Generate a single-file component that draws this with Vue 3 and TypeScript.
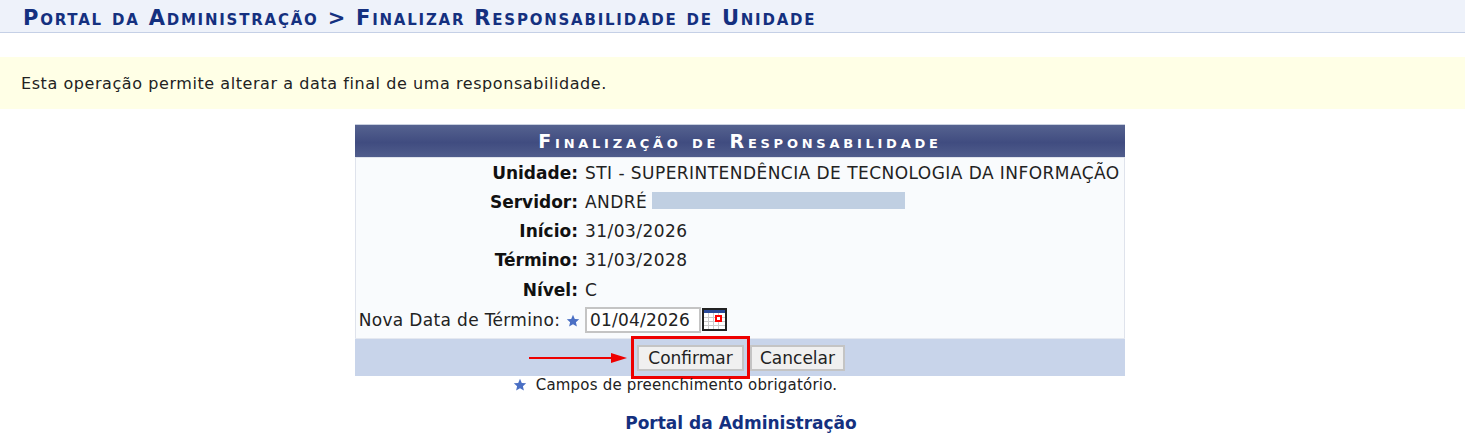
<script setup lang="ts">
const rows = [
  { label: 'Unidade:', value: 'STI - SUPERINTENDÊNCIA DE TECNOLOGIA DA INFORMAÇÃO' },
  { label: 'Servidor:', value: 'ANDRÉ', redacted: true },
  { label: 'Início:', value: '31/03/2026' },
  { label: 'Término:', value: '31/03/2028' },
  { label: 'Nível:', value: 'C' },
]
</script>

<template>
  <div class="page">
    <h2 class="page-title">Portal da Administração &gt; Finalizar Responsabilidade de Unidade</h2>

    <div class="intro">Esta operação permite alterar a data final de uma responsabilidade.</div>

    <div class="form-wrap">
      <table class="form-table">
        <caption>Finalização de Responsabilidade</caption>
        <tbody>
          <tr v-for="row in rows" :key="row.label">
            <th>{{ row.label }}</th>
            <td>
              {{ row.value }}
              <span v-if="row.redacted" class="redacted"></span>
            </td>
          </tr>
          <tr class="date-row">
            <th class="plain">
              Nova Data de Término:
              <svg class="star" viewBox="0 0 14 14"><path d="M7 .8l1.8 4.1 4.4.4-3.3 2.9 1 4.4L7 10.3l-3.9 2.3 1-4.4L.8 5.3l4.4-.4z" /></svg>
            </th>
            <td>
              <div class="date-field">
                <input class="date-input" type="text" value="01/04/2026" />
                <svg class="calendar" viewBox="0 0 25 23">
                  <rect x="0" y="0" width="25" height="23" fill="#222" />
                  <rect x="2" y="2" width="21" height="3" fill="#2a4a9a" />
                  <rect x="2" y="5" width="21" height="16" fill="#fff" />
                  <path d="M6.5 5v16M11.5 5v16M16.5 5v16M2 9.5h21M2 13.5h21M2 17.5h21" stroke="#ccc" stroke-width="1" />
                  <rect x="14" y="8" width="5" height="5" fill="#fff" stroke="#f00" stroke-width="2" />
                </svg>
              </div>
            </td>
          </tr>
        </tbody>
        <tfoot>
          <tr>
            <td colspan="2">
              <div class="actions">
                <span class="arrow-line"></span>
                <span class="highlight">
                  <button type="button" class="confirm">Confirmar</button>
                </span>
                <button type="button" class="cancel">Cancelar</button>
              </div>
            </td>
          </tr>
        </tfoot>
      </table>
    </div>

    <div class="required">
      <svg class="star" viewBox="0 0 14 14"><path d="M7 .8l1.8 4.1 4.4.4-3.3 2.9 1 4.4L7 10.3l-3.9 2.3 1-4.4L.8 5.3l4.4-.4z" /></svg>
      Campos de preenchimento obrigatório.
    </div>

    <div class="back-link"><a href="#">Portal da Administração</a></div>
  </div>
</template>

<style>
html, body {
  margin: 0;
  background: #fff;
}
</style>

<style scoped>
.page {
  height: 433px;
  font-family: "DejaVu Sans", Verdana, sans-serif;
  font-size: 16px;
  color: #222;
}

.page-title {
  margin: 0;
  height: 32px;
  padding-left: 23px;
  line-height: 36px;
  background: #eef2fa;
  border-bottom: 1px solid #c5d0e6;
  color: #14307f;
  font-size: 21px;
  font-weight: bold;
  font-variant: small-caps;
  letter-spacing: 1.77px;
  white-space: nowrap;
}

.intro {
  margin-top: 24px;
  height: 52px;
  line-height: 54px;
  padding-left: 21px;
  background: #ffffe6;
  color: #222;
  letter-spacing: 0.57px;
}

.form-wrap {
  display: flex;
  justify-content: center;
  margin-top: 15px;
  padding-left: 15px;
}

.form-table {
  width: 770px;
  border-collapse: separate;
  border-spacing: 0;
  background: #f9fbfd;
  box-shadow: 0 0 0 1px #dfe3ec inset;
}

.form-table caption {
  height: 32px;
  line-height: 32px;
  background: linear-gradient(#55628f, #404c80 55%, #505d8c);
  color: #fff;
  font-size: 19px;
  font-weight: bold;
  font-variant: small-caps;
  letter-spacing: 3.75px;
  text-align: center;
  border-top: 1px solid #c9d0df;
}

.form-table th,
.form-table td {
  height: 27.25px;
  padding: 2px 0 0;
  font-size: 17px;
  letter-spacing: 0.45px;
  white-space: nowrap;
}

.form-table th {
  width: 223px;
  padding-right: 4px;
  text-align: right;
  font-weight: bold;
  color: #111;
  letter-spacing: 0;
}

.form-table td {
  padding-left: 3px;
}

.form-table .date-row th,
.form-table .date-row td {
  height: 34px;
  padding-top: 0;
  padding-bottom: 2px;
}

.form-table th.plain {
  font-weight: normal;
  color: #222;
  letter-spacing: 0.34px;
}

.redacted {
  display: inline-block;
  width: 253px;
  height: 17px;
  margin-left: -1px;
  vertical-align: -1px;
  background: #c0cfe2;
}

.star {
  display: inline-block;
  width: 14px;
  height: 14px;
  margin-right: -2px;
  vertical-align: -2px;
  fill: #4a6fc4;
}

.date-field {
  display: flex;
  align-items: center;
  gap: 1px;
  padding-bottom: 1px;
}

.date-input {
  width: 116px;
  height: 26px;
  box-sizing: border-box;
  padding: 0 3px;
  border: 2px solid #c4c4c4;
  background: #fff;
  color: #222;
  font-family: inherit;
  font-size: 17px;
  letter-spacing: 0.2px;
}

.calendar {
  width: 25px;
  height: 23px;
  display: block;
}

.form-table tfoot td {
  height: 37px;
  padding: 0;
  background: #c8d4ea;
  box-shadow: 0 -1px 0 #e4e8f0;
}

.actions {
  display: flex;
  align-items: center;
  height: 37px;
  padding-left: 174px;
}

.arrow-line {
  position: relative;
  width: 93px;
  height: 2px;
  margin-right: 9px;
  background: #ee0000;
}

.arrow-line::after {
  content: "";
  position: absolute;
  right: -5px;
  top: -4px;
  border-left: 16px solid #ee0000;
  border-top: 5px solid transparent;
  border-bottom: 5px solid transparent;
}

.highlight {
  display: flex;
  align-items: center;
  justify-content: center;
  width: 119px;
  height: 43px;
  margin: -3px 0;
  box-sizing: border-box;
  border: 3px solid #ee0000;
}

.actions button {
  height: 26px;
  padding: 0;
  border: 2px solid #c4c4c4;
  background: #f0f0f0;
  color: #222;
  font-family: inherit;
  font-size: 17px;
  letter-spacing: 0;
  white-space: nowrap;
}

.actions .confirm {
  width: 107px;
}

.actions .cancel {
  width: 95px;
}

.required {
  margin-top: 0;
  padding-right: 115px;
  text-align: center;
  font-size: 15px;
  letter-spacing: 0.2px;
  line-height: 19px;
  color: #222;
}

.required .star {
  margin: 0 4px 0 0;
}

.back-link {
  margin-top: 20px;
  padding-left: 17px;
  text-align: center;
  font-size: 17px;
  line-height: 16px;
  font-weight: bold;
}

.back-link a {
  display: inline-block;
  color: #14307f;
  text-decoration: none;
}
</style>
